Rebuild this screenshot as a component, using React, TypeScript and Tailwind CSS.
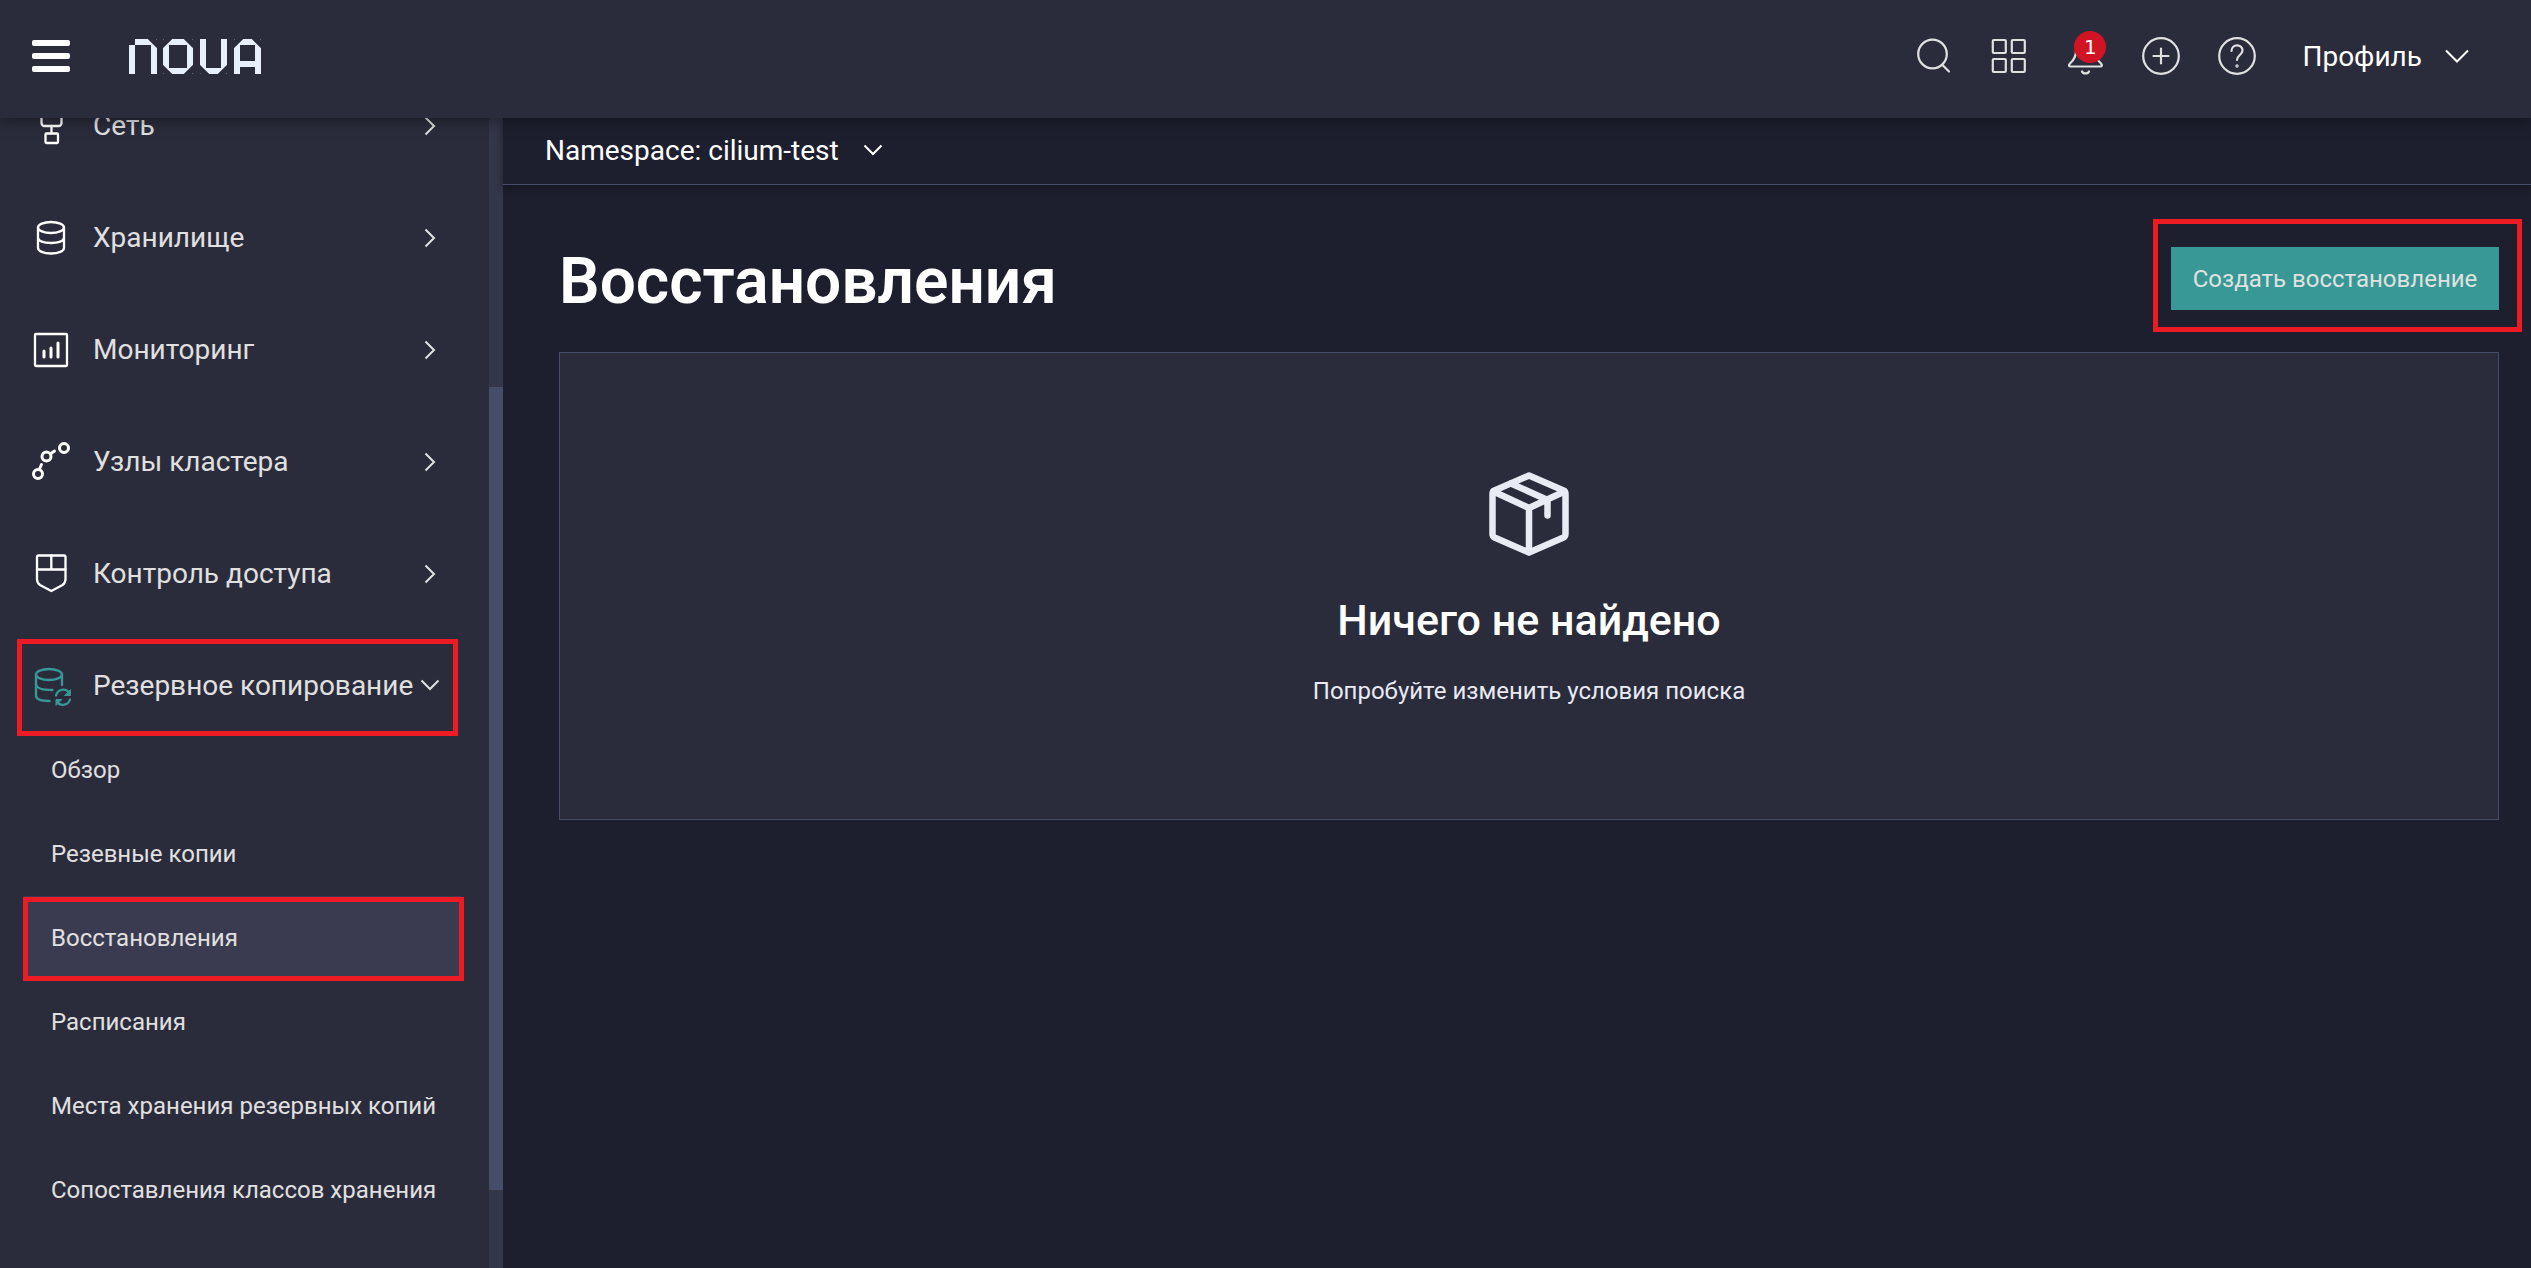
import { useState } from 'react'
import type { ReactNode } from 'react'

// ---------------- Logo ----------------
function Logo() {
  return (
    <svg role="img" aria-label="Nova" className="h-[35px] w-[132px]" viewBox="0 0 132 35" fill="none">
      <g stroke="#e8effc" strokeWidth="6">
        <path d="M3 35V6M6 3H25V35" />
        <rect x="37" y="3" width="24" height="29" />
        <path d="M74 0V32H95V0" />
        <path d="M108 35V3H129V35M108 25H129" />
      </g>
      {/* bevelled corners */}
      <g stroke="#2b2c3b" strokeWidth="6">
        <path d="M20 -3L31 8" />
        <path d="M31 8L42 -3M56 -3L67 8M31 27L42 38M56 38L67 27" />
        <path d="M68 27L79 38M90 38L101 27" />
        <path d="M102 8L113 -3M124 -3L135 8" />
      </g>
    </svg>
  )
}

// ---------------- Icons ----------------
function NavIcon({ children }: { children: ReactNode }) {
  return (
    <svg
      aria-hidden
      className="size-10 shrink-0 overflow-visible"
      viewBox="0 0 40 40"
      fill="none"
      stroke="currentColor"
      strokeWidth="2.3"
      strokeLinecap="round"
      strokeLinejoin="round"
    >
      {children}
    </svg>
  )
}

function HeaderIcon({ children }: { children: ReactNode }) {
  return (
    <svg
      aria-hidden
      className="size-[38px]"
      viewBox="0 0 38 38"
      fill="none"
      stroke="currentColor"
      strokeWidth="2.2"
      strokeLinecap="round"
      strokeLinejoin="round"
    >
      {children}
    </svg>
  )
}

function Chevron({ open = false }: { open?: boolean }) {
  return (
    <svg aria-hidden className="size-5 shrink-0" viewBox="0 0 20 20" fill="none" stroke="currentColor" strokeWidth="2">
      <path d={open ? 'M1.5 4.5L10 13L18.5 4.5' : 'M5.5 1.5L14 10L5.5 18.5'} />
    </svg>
  )
}

const icons = {
  network: (
    <>
      <rect x="10.5" y="6" width="20" height="14" rx="3" />
      <path d="M20.5 20V27" />
      <rect x="14.5" y="27.5" width="12.5" height="9.5" rx="1" />
    </>
  ),
  storage: (
    <>
      <ellipse cx="20" cy="9.5" rx="13" ry="5.5" />
      <path d="M7 9.5V30C7 33 12.5 35.5 20 35.5S33 33 33 30V9.5" />
      <path d="M7 20C7 23 12.5 25 20 25S33 23 33 20" />
    </>
  ),
  monitoring: (
    <>
      <rect x="4" y="4" width="32" height="32" rx="1" />
      <path d="M13 21V27M20 18V27M27 13V27" strokeWidth="3" />
    </>
  ),
  nodes: (
    <g strokeWidth="3">
      <circle cx="33" cy="6" r="4.5" />
      <circle cx="15.5" cy="14.5" r="4.5" />
      <circle cx="7" cy="32" r="4.5" />
      <path d="M20 11.5L23.5 9M8.5 27L10.5 22.5" />
    </g>
  ),
  access: (
    <>
      <path d="M6 3Q6 1.5 7.5 1.5H33Q34.5 1.5 34.5 3V25Q34.5 29 31.5 31L20.3 37L9 31Q6 29 6 25Z" />
      <path d="M6 15.5H34.5M20.3 1.5V15.5" />
    </>
  ),
  backup: (
    <>
      <ellipse cx="18" cy="8.5" rx="13" ry="5.5" />
      <path d="M5 8.5V29.5C5 33 10 35 18.5 35M31 8.5V19" />
      <path d="M5 18C5 22 11 24 21.5 24" />
      <path d="M25 29.5A7.5 7.5 0 0 1 38.5 27M39 33.5A7.5 7.5 0 0 1 26 36" />
      <path d="M39.5 24V29.5H34ZM25 39V33.5H30.5Z" fill="currentColor" strokeWidth="1" />
    </>
  ),
}

// ---------------- Data ----------------
const sections = [
  { title: 'Сеть', icon: icons.network },
  { title: 'Хранилище', icon: icons.storage },
  { title: 'Мониторинг', icon: icons.monitoring },
  { title: 'Узлы кластера', icon: icons.nodes },
  { title: 'Контроль доступа', icon: icons.access },
]

const backupLinks = [
  'Обзор',
  'Резевные копии',
  'Восстановления',
  'Расписания',
  'Места хранения резервных копий',
  'Сопоставления классов хранения',
]

// ---------------- Header ----------------
function Header() {
  return (
    <header className="sticky top-0 z-20 flex h-[118px] items-center justify-between bg-[#2b2c3b] pr-[62px] pb-1.5 pl-8 shadow-[0_0_16px_rgba(0,0,0,0.5)]">
      <div className="flex items-center gap-[59px]">
        <button type="button" aria-label="Меню" className="flex w-[38px] flex-col gap-[7px]">
          <span className="h-1.5 rounded-xs bg-white" />
          <span className="h-1.5 rounded-xs bg-white" />
          <span className="h-1.5 rounded-xs bg-white" />
        </button>
        <a href="#home" aria-label="Nova">
          <Logo />
        </a>
      </div>

      <div className="flex items-center gap-[38px] text-[#e0e0e0]">
        <button type="button" aria-label="Поиск">
          <HeaderIcon>
            <circle cx="18.5" cy="17" r="14.3" />
            <path d="M28.5 28L35 34.5" />
          </HeaderIcon>
        </button>
        <button type="button" aria-label="Приложения">
          <HeaderIcon>
            <rect x="2.8" y="3" width="13" height="13" rx="1" />
            <rect x="21.8" y="3" width="13" height="13" rx="1" />
            <rect x="2.8" y="22" width="13" height="13" rx="1" />
            <rect x="21.8" y="22" width="13" height="13" rx="1" />
          </HeaderIcon>
        </button>
        <button type="button" aria-label="Уведомления" className="relative">
          <HeaderIcon>
            <path d="M19.5 4C13 4 10 8.5 10 14C10 20 8 23 4 26.5C2 28.5 3 29.5 5 29.5H34C36 29.5 36.5 28.5 35 26.5C31 23 29 20 29 14C29 8.5 26 4 19.5 4Z" />
            <path d="M16 34.5C17 37 22 37 23 34.5" />
          </HeaderIcon>
          <span className="absolute -top-1.5 left-2 flex size-8 items-center justify-center rounded-full bg-[#d01423] font-['DejaVu_Sans',sans-serif] text-xl text-white">
            1
          </span>
        </button>
        <button type="button" aria-label="Создать">
          <HeaderIcon>
            <circle cx="19" cy="19" r="17.8" />
            <path d="M19 11.5V26.5M11.5 19H26.5" />
          </HeaderIcon>
        </button>
        <button type="button" aria-label="Справка">
          <HeaderIcon>
            <circle cx="19" cy="19" r="17.8" />
            <path d="M13.5 14C13.500 6.5 24.5 6.5 24.5 13.5C24.5 18 19 18 19 23" />
            <circle cx="19" cy="29" r="0.6" />
          </HeaderIcon>
        </button>
        <button type="button" className="ml-2 flex items-center gap-[23px] text-[28px] leading-9 text-white">
          <span className="pt-0.5">Профиль</span>
          <svg aria-hidden className="h-3.5 w-6" viewBox="0 0 24 14" fill="none" stroke="currentColor" strokeWidth="2">
            <path d="M1 1.5L12 12.5L23 1.5" />
          </svg>
        </button>
      </div>
    </header>
  )
}

// ---------------- Sidebar ----------------
function Sidebar() {
  const [active, setActive] = useState('Восстановления')

  return (
    <aside className="flex w-[503px] shrink-0 overflow-hidden bg-[#2b2c3b] text-[#e0e0e0]">
      {/* list is scrolled slightly under the header */}
      <nav className="-mt-[34px] flex-1 pr-7 pl-[23px]">
        <ul className="flex flex-col gap-7">
          {sections.map((s) => (
            <li key={s.title}>
              <button type="button" className="flex h-[84px] w-full items-center pr-[21px] pl-2 text-left text-[28px] leading-9">
                <span className="text-white">
                  <NavIcon>{s.icon}</NavIcon>
                </span>
                <span className="ml-[22px] flex-1">{s.title}</span>
                <Chevron />
              </button>
            </li>
          ))}
          <li>
            <div className="relative">
              <button type="button" aria-expanded className="flex h-[84px] w-full items-center pr-[21px] pl-2 text-left text-[28px] leading-9">
                <span className="text-[#379896]">
                  <NavIcon>{icons.backup}</NavIcon>
                </span>
                <span className="ml-[22px] flex-1 whitespace-nowrap">Резервное копирование</span>
                <Chevron open />
              </button>
              <span className="pointer-events-none absolute -top-[5px] right-[3px] -bottom-2 -left-1.5 border-[5px] border-[#ed1c24]" />
            </div>
            <ul>
              {backupLinks.map((title) => (
                <li key={title} className="relative">
                  <a
                    href="#backup"
                    onClick={() => setActive(title)}
                    className={`flex h-[84px] items-center pl-7 text-2xl whitespace-nowrap ${title === active ? 'bg-[#3a3b51]' : ''}`}
                  >
                    {title}
                  </a>
                  {title === 'Восстановления' && (
                    <span className="pointer-events-none absolute top-px -right-[3px] -bottom-px left-0 border-[5px] border-[#ed1c24]" />
                  )}
                </li>
              ))}
            </ul>
          </li>
        </ul>
      </nav>
      <div aria-hidden className="w-3.5 bg-[#343649] pt-[269px]">
        <div className="h-[803px] bg-[#464d68]" />
      </div>
    </aside>
  )
}

// ---------------- Empty state ----------------
function EmptyState() {
  return (
    <section className="flex flex-col items-center border border-[#464d68] bg-[#2b2c3b] pt-[119px] pb-28 text-center">
      <svg
        aria-hidden
        className="h-[84px] w-20"
        viewBox="0 0 80 84"
        fill="none"
        stroke="#e8eaf4"
        strokeWidth="6.5"
        strokeLinecap="round"
        strokeLinejoin="round"
      >
        <path d="M40 3.5L74.5 18.5Q76.5 19.5 76.5 22V62Q76.5 64.5 74.5 65.5L40 80.5L5.5 65.5Q3.5 64.5 3.5 62V22Q3.5 19.5 5.5 18.5Z" />
        <path d="M4.5 19.5L40 36L75.5 19.5M40 36V80" />
        <path d="M22 11.5L58.5 28V43.5" />
      </svg>
      <h2 className="mt-9 text-[43px] leading-[56px] font-medium text-white">Ничего не найдено</h2>
      <p className="mt-[27px] text-2xl text-[#e8eaf4]">Попробуйте изменить условия поиска</p>
    </section>
  )
}

// ---------------- Page ----------------
export default function App() {
  return (
    <div className="flex min-h-screen flex-col bg-[#1e1f2e] font-[Roboto,sans-serif]">
      <Header />
      <div className="flex flex-1">
        <Sidebar />
        <div className="min-w-0 flex-1">
          <div className="flex h-[67px] items-center border-b border-[#464d68] pl-[42px] shadow-[0_2px_8px_rgba(0,0,0,0.4)]">
            <button type="button" className="flex items-center gap-6 text-[28px] leading-9 text-white">
              Namespace: cilium-test
              <Chevron open />
            </button>
          </div>
          <main className="pt-[62px] pr-8 pl-14">
            <div className="mb-[35px] flex items-start justify-between">
              <h1 className="text-[64px] leading-[70px] font-semibold text-white">Восстановления</h1>
              <div className="relative">
                <button type="button" className="h-[63px] min-w-[328px] bg-[#379896] px-5 text-2xl text-[#e0e0e0]">
                  Создать восстановление
                </button>
                <span className="pointer-events-none absolute -top-7 -right-[23px] -bottom-[22px] -left-[18px] border-[5px] border-[#ed1c24]" />
              </div>
            </div>
            <EmptyState />
          </main>
        </div>
      </div>
    </div>
  )
}
